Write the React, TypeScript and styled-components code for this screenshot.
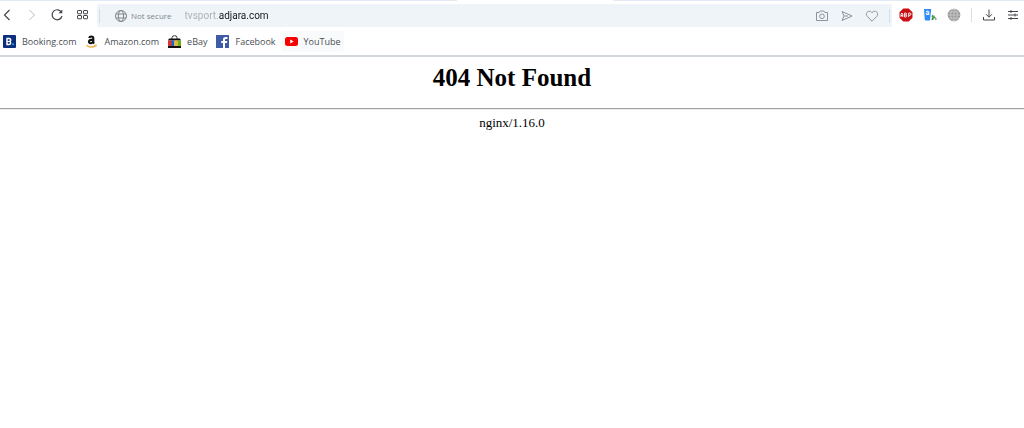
import React from "react";
import styled, { createGlobalStyle } from "styled-components";

const GlobalStyle = createGlobalStyle`
  * { box-sizing: border-box; }
  body { margin: 0; background: #fff; font-family: "Open Sans", "Noto Sans", sans-serif; }
`;

const TabStrip = styled.div`
  display: flex;
  justify-content: center;
  height: 1px;
  padding-left: 46px;
  background: #e3ebf6;
`;

const ActiveTab = styled.div`
  width: 16%;
  background: #fff;
`;

const Chrome = styled.header`
  border-bottom: 2px solid #d3d8de;
`;

const Toolbar = styled.div`
  display: flex;
  align-items: center;
  height: 28px;
`;

const NavButtons = styled.div`
  display: flex;
  gap: 11px;
  margin-right: 8px;
`;

const IconButton = styled.button<{ $tone?: string }>`
  display: flex;
  align-items: center;
  justify-content: center;
  width: 14px;
  height: 20px;
  padding: 0;
  border: 0;
  background: none;
  color: ${(p) => p.$tone ?? "#44484d"};

  svg { flex: none; display: block; }
`;

const AddressBar = styled.div`
  display: flex;
  flex: 1;
  align-items: center;
  height: 23px;
  margin-top: 1px;
  padding: 1px 2px 0;
  border-radius: 2px;
  background: #eef4f7;
`;

const Divider = styled.span`
  width: 1px;
  height: 14px;
  background: #d9dee2;
`;

const SiteStatus = styled.button`
  display: flex;
  align-items: center;
  gap: 3px;
  margin-left: 14px;
  padding: 0;
  border: 0;
  background: none;
  color: #80868a;
  font: 8px/14px "Open Sans", "Noto Sans", sans-serif;

  svg { display: block; }
`;

const AddressInput = styled.input`
  flex: 1;
  min-width: 0;
  height: 20px;
  margin-left: 13px;
  padding: 0;
  border: 0;
  outline: 0;
  color: #16191c;
  font: 10px/20px Roboto, "Open Sans", sans-serif;
  background: linear-gradient(90deg, #a9aeb2 34px, #16191c 34px);
  background-clip: text;
  -webkit-background-clip: text;
  -webkit-text-fill-color: transparent;
`;

const AddressActions = styled.div`
  display: flex;
  align-items: center;
  gap: 11px;
  margin-right: 10px;
`;

const Extensions = styled.div`
  display: flex;
  align-items: center;
  gap: 10px;
  padding: 0 4px 0 7px;
`;

const Bookmarks = styled.nav`
  display: flex;
  align-items: center;
  gap: 3px;
  height: 26px;
  padding-bottom: 1px;
`;

const Bookmark = styled.a<{ $hovered?: boolean }>`
  display: flex;
  align-items: center;
  gap: 6px;
  height: 21px;
  padding: 0 3px;
  border-radius: 2px;
  background: ${(p) => (p.$hovered ? "#f8fafc" : "transparent")};
  color: #4a4e53;
  font-size: 9px;
  line-height: 13px;
  text-decoration: none;

  svg { flex: none; display: block; }
`;

const Page = styled.main`
  padding-top: 7px;
  font-family: "Liberation Serif", "Times New Roman", serif;
  color: #000;
  text-align: center;
`;

const Title = styled.h1`
  margin: 0;
  font-size: 25px;
  line-height: 28px;
`;

const Rule = styled.hr`
  height: 2px;
  margin: 16px 0 5px;
  border: 0;
  border-top: 1px solid #a0a0a0;
  border-bottom: 1px solid #ececec;
`;

const Server = styled.p`
  margin: 0;
  font-size: 13px;
  line-height: 15px;
`;

const Glyph = ({ size = 14, children }: { size?: number; children: React.ReactNode }) => (
  <svg width={size} height={size} viewBox="0 0 14 14" fill="none" stroke="currentColor" strokeWidth="1" aria-hidden="true">
    {children}
  </svg>
);

const BookingIcon = () => (
  <svg width="13" height="13" viewBox="0 0 13 13" aria-hidden="true">
    <rect width="13" height="13" rx="1" fill="#0b2f7d" />
    <path d="M4 3.5v6h2.1a1.6 1.6 0 0 0 .5-3.1A1.5 1.5 0 0 0 5.8 3.5z" fill="none" stroke="#fff" strokeWidth="1.5" />
    <path d="M4 6.5h2" stroke="#fff" strokeWidth="1" />
    <circle cx="10" cy="9.3" r="1" fill="#27a5e8" />
  </svg>
);

const AmazonIcon = () => (
  <svg width="13" height="13" viewBox="0 0 13 13" fill="none" aria-hidden="true">
    <path d="M4.200 3C4.500 1.200 8.300.8 8.300 3.200v3.700c0 .8.3 1.100.9 1.600M8.300 4.600C5.600 4.600 4 5.100 4 6.800c0 2.200 3.700 2 4.300-.5" stroke="#111" strokeWidth="2.100" />
    <path d="M1.500 10.300c2.600 2.100 6.300 2.100 9 .3" stroke="#f3a52e" strokeWidth="1.300" />
    <path d="M9.600 9.800h1.900l-.6 1.800" stroke="#f3a52e" strokeWidth=".8" />
  </svg>
);

const EbayIcon = () => (
  <svg width="13" height="13" viewBox="0 0 13 13" aria-hidden="true">
    <path d="M4 4V2.500Q4 .7 6.500 .7T9 2.500V4" fill="none" stroke="#333" strokeWidth="1" />
    <path d="M1 3.500h11l1 2H0z" fill="#111" />
    <path d="M0 5.500h4V11H0z" fill="#e2332d" />
    <path d="M3.500 5.500h3V11h-3z" fill="#1766d0" />
    <path d="M6.500 5.500h3V11h-3z" fill="#f5b51b" />
    <path d="M9.500 5.500H13V11H9.500z" fill="#6fae1f" />
    <path d="M0 11h13v2H0z" fill="#111" />
  </svg>
);

const FacebookIcon = () => (
  <svg width="13" height="13" viewBox="0 0 13 13" aria-hidden="true">
    <rect width="13" height="13" fill="#3d5ba6" />
    <path d="M9 13V8h2l.3-2H9V4.900c0-.7.3-1 1-1h1.400V2.100C9 1.700 7 2.200 7 4.500V6H5.200v2H7v5z" fill="#fff" />
  </svg>
);

const YouTubeIcon = () => (
  <svg width="13" height="13" viewBox="0 0 13 13" aria-hidden="true">
    <rect x="0" y="2" width="13" height="9" rx="2.500" fill="#f70000" />
    <path d="M5.200 4.500v4l3.500-2z" fill="#fff" />
  </svg>
);

const AbpIcon = () => (
  <svg width="14" height="14" viewBox="0 0 14 14" aria-hidden="true">
    <path d="M4.300.5h5.400l3.800 3.800v5.400l-3.800 3.800H4.300L.5 9.700V4.300z" fill="#c90d12" />
    <path
      d="M2 9V6l.9-1 .9 1v3M2 7.500h1.800M5.600 5v4h1.200q1-.1 1-1t-1-1H5.600M5.600 5h1q1 .1 1 1t-1 1M9.700 9V5H11q1 .1 1 1.100T11 7.300H9.700"
      fill="none"
      stroke="#fff"
      strokeWidth=".9"
    />
  </svg>
);

const TranslateIcon = () => (
  <svg width="14" height="14" viewBox="0 0 14 14" aria-hidden="true">
    <path d="M1.500 1h6.700L7 12.500H3Q1.800 12.500 1.700 11L1 1.500z" fill="#2d8cf7" />
    <path d="M3 3.500q2.800-1.300 2.800.8v2.700M5.800 4.900Q2.800 4.600 2.900 6T5.800 6" fill="none" stroke="#fff" strokeWidth="1" />
    <path d="M8.500 8.200h3.200M9.700 6.800v5M11.800 9q-3 .8-3 2.600 1.700.3 2.700-2.200 2.500.6 1.300 2.600" fill="none" stroke="#3d8f3f" strokeWidth="1" />
  </svg>
);

const GlobeLines = () => (
  <>
    <circle cx="7" cy="7" r="5.500" />
    <ellipse cx="7" cy="7" rx="2.600" ry="5.500" />
    <path d="M2 5h10M2 9h10" />
  </>
);

const bookmarks = [
  { label: "Booking.com", href: "#booking", Icon: BookingIcon },
  { label: "Amazon.com", href: "#amazon", Icon: AmazonIcon },
  { label: "eBay", href: "#ebay", Icon: EbayIcon },
  { label: "Facebook", href: "#facebook", Icon: FacebookIcon },
  { label: "YouTube", href: "#youtube", Icon: YouTubeIcon, hovered: true },
];

export default function App() {
  return (
    <>
      <GlobalStyle />
      <Chrome>
        <TabStrip>
          <ActiveTab />
        </TabStrip>
        <Toolbar>
          <NavButtons>
            <IconButton aria-label="Back">
              <Glyph><path d="M9.500 2 4.500 7l5 5" strokeWidth="1.200" /></Glyph>
            </IconButton>
            <IconButton aria-label="Forward" $tone="#b9bcc0">
              <Glyph><path d="m4.500 2 5 5-5 5" /></Glyph>
            </IconButton>
            <IconButton aria-label="Reload">
              <Glyph>
                <path d="M11.600 4.500A5 5 0 1 0 12 8" strokeWidth="1.200" />
                <path d="M12.300 1.500v3.800H8.500z" fill="currentColor" stroke="none" />
              </Glyph>
            </IconButton>
            <IconButton aria-label="Speed dial">
              <Glyph>
                <rect x="2.500" y="2.500" width="4" height="3.300" rx=".5" />
                <rect x="8.500" y="2.500" width="4" height="3.300" rx=".5" />
                <rect x="2.500" y="7.500" width="4" height="3.300" rx=".5" />
                <rect x="8.500" y="7.500" width="4" height="3.300" rx=".5" />
              </Glyph>
            </IconButton>
          </NavButtons>
          <AddressBar>
            <Divider />
            <SiteStatus>
              <Glyph><GlobeLines /></Glyph>
              Not secure
            </SiteStatus>
            <AddressInput aria-label="Address" defaultValue="tvsport.adjara.com" spellCheck={false} />
            <AddressActions>
              <IconButton aria-label="Snapshot" $tone="#8d9398">
                <Glyph>
                  <path d="M1.500 3.500h2.700l1-1.500h3.600l1 1.500h2.700v8h-11z" />
                  <circle cx="7" cy="7.300" r="2.300" />
                </Glyph>
              </IconButton>
              <IconButton aria-label="Send to device" $tone="#8d9398">
                <Glyph><path d="M2 2.500 12 7 2 11.500 4 7zM4 7h4" /></Glyph>
              </IconButton>
              <IconButton aria-label="Add to bookmarks" $tone="#8d9398">
                <Glyph><path d="M7 12.200 2.300 7.500C.2 5.200 2 2.200 4.300 2.200 5.700 2.200 6.700 3 7 4c.3-1 1.300-1.800 2.700-1.800 2.300 0 4.100 3 2 5.300z" /></Glyph>
              </IconButton>
            </AddressActions>
            <Divider />
          </AddressBar>
          <Extensions>
            <IconButton aria-label="Adblock Plus"><AbpIcon /></IconButton>
            <IconButton aria-label="Translate"><TranslateIcon /></IconButton>
            <IconButton aria-label="Web proxy">
              <Glyph>
                <circle cx="7" cy="7" r="6.300" fill="#9a9a9a" stroke="none" />
                <path d="M7 1v12M1 7h12M2 4h10M2 10h10" stroke="#d2d2d2" strokeWidth=".7" />
                <ellipse cx="7" cy="7" rx="3.300" ry="6" stroke="#d2d2d2" strokeWidth=".7" />
              </Glyph>
            </IconButton>
            <Divider />
            <IconButton aria-label="Downloads">
              <Glyph><path d="M7 1.500v7.500M4 6.200l3 3 3-3M1.500 9v3h11V9" /></Glyph>
            </IconButton>
            <IconButton aria-label="Easy setup">
              <Glyph><path d="M2 3.500h10M2 7h10M2 10.500h10M5 2v3M9 5.500v3M5 9v3" /></Glyph>
            </IconButton>
          </Extensions>
        </Toolbar>
        <Bookmarks aria-label="Bookmarks">
          {bookmarks.map(({ label, href, Icon, hovered }) => (
            <Bookmark key={label} href={href} $hovered={hovered}>
              <Icon />
              {label}
            </Bookmark>
          ))}
        </Bookmarks>
      </Chrome>
      <Page>
        <Title>404 Not Found</Title>
        <Rule />
        <Server>nginx/1.16.0</Server>
      </Page>
    </>
  );
}
